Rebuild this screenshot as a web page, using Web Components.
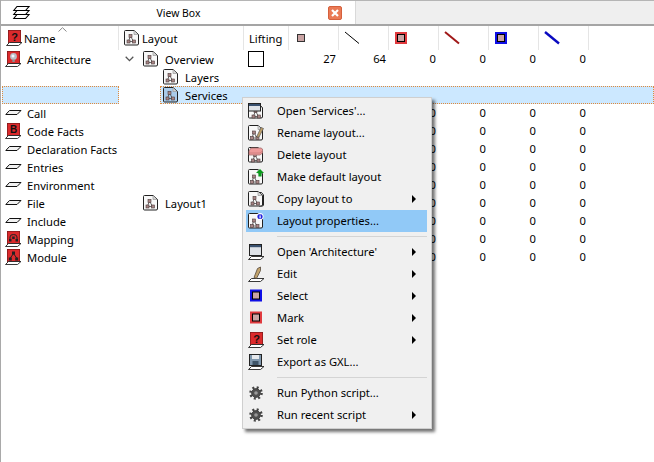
<!DOCTYPE html>
<html>
<head>
<meta charset="utf-8">
<title>View Box</title>
<style>
  html, body { margin: 0; height: 100%; background: #fff; }
  body { font: 11.2px "Noto Sans", "Liberation Sans", sans-serif; color: #000; overflow: hidden; }
</style>
</head>
<body>
<app-window>
  <tab-bar slot="tabs" label="View Box"></tab-bar>

  <tree-header slot="table"></tree-header>
  <tree-row slot="table" icon="bulb" layout="Overview" expanded lift values="27,64,0,0,0,0">Architecture</tree-row>
  <tree-row slot="table" layout="Layers" indent="41"></tree-row>
  <tree-row slot="table" layout="Services" indent="41" selected></tree-row>
  <tree-row slot="table" icon="plane" values=",,0,0,0,0">Call</tree-row>
  <tree-row slot="table" icon="bfact" values=",,0,0,0,0">Code Facts</tree-row>
  <tree-row slot="table" icon="plane" values=",,0,0,0,0">Declaration Facts</tree-row>
  <tree-row slot="table" icon="plane" values=",,0,0,0,0">Entries</tree-row>
  <tree-row slot="table" icon="plane" values=",,0,0,0,0">Environment</tree-row>
  <tree-row slot="table" icon="plane" layout="Layout1" values=",,0,0,0,0">File</tree-row>
  <tree-row slot="table" icon="plane" values=",,0,0,0,0">Include</tree-row>
  <tree-row slot="table" icon="mapping" values=",,0,0,0,0">Mapping</tree-row>
  <tree-row slot="table" icon="module" values=",,0,0,0,0">Module</tree-row>

  <context-menu slot="overlay">
    <menu-item icon="openLayout">Open 'Services'...</menu-item>
    <menu-item icon="rename">Rename layout...</menu-item>
    <menu-item icon="erase">Delete layout</menu-item>
    <menu-item icon="makeDefault">Make default layout</menu-item>
    <menu-item icon="copy" sub>Copy layout to</menu-item>
    <menu-item icon="props" active>Layout properties...</menu-item>
    <menu-sep></menu-sep>
    <menu-item icon="openNode" sub>Open 'Architecture'</menu-item>
    <menu-item icon="edit" sub>Edit</menu-item>
    <menu-item icon="select" sub>Select</menu-item>
    <menu-item icon="mark" sub>Mark</menu-item>
    <menu-item icon="role" sub>Set role</menu-item>
    <menu-item icon="gxl">Export as GXL...</menu-item>
    <menu-sep></menu-sep>
    <menu-item icon="gear">Run Python script...</menu-item>
    <menu-item icon="gear" sub>Run recent script</menu-item>
  </context-menu>
</app-window>

<script>
// little graph drawn inside every layout icon
const nodes = (x, y) => `
  <path d="M${x + 4} ${y + 2}L${x + 2} ${y + 7}M${x + 4} ${y + 2}L${x + 7} ${y + 7.5}M${x + 2} ${y + 7.5}H${x + 7}" stroke="#444" stroke-width=".8" fill="none"/>
  <rect x="${x + 2.5}" y="${y + .5}" width="3" height="3" fill="#a98686" stroke="#4a3a3a" stroke-width=".6"/>
  <rect x="${x + .5}" y="${y + 6}" width="3" height="3" fill="#a98686" stroke="#4a3a3a" stroke-width=".6"/>
  <rect x="${x + 6}" y="${y + 6}" width="3" height="3" fill="#a98686" stroke="#4a3a3a" stroke-width=".6"/>`;

const doc = (fill = '#f8f8f8') => `
  <path d="M.5 1.5Q.5 .5 1.5 .5H10L14.5 4.5V14Q14.5 15 13 15H1.5Q.5 15 .5 14Z" fill="${fill}" stroke="#222"/>
  <path d="M10 .8V4.5H14" fill="#d4d4d4" stroke="#999" stroke-width=".7"/>`;

const plate = '<path d="M3.5 12.5H16L12.5 15.5H.5Z" fill="#fff" stroke="#222" stroke-width=".9"/>';
const redBox = inner => `<rect x="2" y="0" width="13" height="13" fill="#7a1a1a"/><rect x="2.7" y=".7" width="11.6" height="11.6" fill="#dc2a2c"/>${inner}${plate}`;
const frame = color => `<rect x="2" y="1.5" width="12" height="12" fill="${color}"/><rect x="4.5" y="4" width="7" height="7" fill="#c9a3a3" stroke="#000"/>`;
const gear = `
  <circle cx="8" cy="8" r="5.6" fill="none" stroke="#444" stroke-width="2.4" stroke-dasharray="2 2.4"/>
  <circle cx="8" cy="8" r="4.4" fill="#4f4f4f" stroke="#333" stroke-width=".8"/>
  <circle cx="8" cy="8" r="1.8" fill="#999"/>`;

const question = '<text x="8.5" y="10.6" text-anchor="middle" font-family="Liberation Sans" font-weight="700" font-size="11" fill="#111">?</text>';

const ICONS = {
  layout: doc() + nodes(2.5, 4),
  layoutSel: doc('#a9cbea') + nodes(2.5, 4),
  stack: `<g fill="#fff" stroke="#000" stroke-width="1.1"><path d="M4 9.5H16L12.5 13.5H.8Z"/><path d="M4 5.5H16L12.5 9.5H.8Z"/><path d="M4 1.5H16L12.5 5.5H.8Z"/></g>`,
  plane: '<path d="M4.5 5.5H16L12 9.5H.8Z" fill="#f2f2f2" stroke="#111"/>',
  question: redBox(question),
  bulb: redBox('<circle cx="8.5" cy="5.5" r="3.4" fill="#b9bec5"/><circle cx="8" cy="5" r="1.5" fill="#f2f4ff"/><rect x="7.3" y="8.5" width="2.5" height="2.5" fill="#8f8f8f"/>'),
  bfact: redBox('<text x="8.5" y="10.4" text-anchor="middle" font-family="Liberation Sans" font-weight="700" font-size="10" fill="#111">B</text>'),
  mapping: redBox('<path d="M5 8.5V6Q5 3.5 8.5 3.5T12 6V8.5" fill="none" stroke="#222"/><rect x="4" y="8" width="2.5" height="2.5" fill="#222"/><rect x="10.5" y="8" width="2.5" height="2.5" fill="#222"/><rect x="7.2" y="5.5" width="2.5" height="2.5" fill="#222"/>'),
  module: redBox('<path d="M8.5 4.5L5 9.5M8.5 4.5L12 9.5" stroke="#222"/><rect x="7" y="2.5" width="3" height="3" fill="#222"/><rect x="3.8" y="8.5" width="3" height="3" fill="#222"/><rect x="10.2" y="8.5" width="3" height="3" fill="#222"/>'),
  openLayout: doc() + nodes(3.5, 6) + '<rect x=".5" y=".5" width="12" height="7.5" fill="#dfe3e8" stroke="#222"/><rect x="1" y="1" width="11" height="2" fill="#39516f"/>',
  rename: doc() + nodes(2, 5.5) + '<path d="M9 11L13 2.5L15.5 3.5L11 12L9 12.5Z" fill="#c0a068" stroke="#555" stroke-width=".7"/>',
  erase: doc() + nodes(3, 6) + '<path d="M3 1H13L14.5 2V6L12 8H1V4Z" fill="#ee9a9a" stroke="#a07070" stroke-width=".8"/><path d="M1 6H12L14.5 4" fill="none" stroke="#c97878" stroke-width=".8"/>',
  makeDefault: doc() + nodes(2, 5.5) + '<path d="M12 0L16 4H13.6V7.5H10.4V4H8Z" fill="#0b9a1c"/>',
  copy: '<path d="M11 1.5H13.5L15.5 4V14Q15.5 15 14 15H11" fill="#eee" stroke="#222"/>' + doc() + nodes(2.5, 5),
  props: doc() + nodes(2, 5.5) + '<circle cx="12" cy="3.5" r="3.5" fill="#fff"/><circle cx="12" cy="3.5" r="2.6" fill="#2222dd"/><rect x="11.5" y="3" width="1.2" height="2.4" fill="#fff"/><rect x="11.5" y="1.6" width="1.2" height="1" fill="#fff"/>',
  openNode: '<rect x="1.5" y=".5" width="12" height="11" fill="#dfe3e8" stroke="#222"/><rect x="2" y="1" width="11" height="2.2" fill="#39516f"/>' + plate,
  edit: plate + '<path d="M6 11.5L9.5 2.5L12.5 1L12.5 4.5L8.5 12.5Z" fill="#c2a36c" stroke="#55483a" stroke-width=".8"/>',
  select: frame('#0f0fe6'),
  mark: frame('#e03a3e'),
  role: redBox(question),
  gxl: '<rect x="1.5" y=".5" width="12" height="11" fill="#7f97ad" stroke="#222"/><rect x="4" y="1" width="7" height="4" fill="#e6e9ed"/><rect x="4.5" y="7" width="6" height="4" fill="#3e5468"/>' + plate,
  gear,
};

class UiIcon extends HTMLElement {
  connectedCallback() {
    this.attachShadow({ mode: 'open' }).innerHTML = `
      <style>
        :host { display: block; width: 16px; height: 16px; flex: none; }
        svg { display: block; overflow: visible; }
      </style>
      <svg width="16" height="16" viewBox="0 0 16 16">${ICONS[this.getAttribute('name')] || ''}</svg>`;
  }
}
customElements.define('ui-icon', UiIcon);

class AppWindow extends HTMLElement {
  constructor() {
    super();
    this.attachShadow({ mode: 'open' }).innerHTML = `
      <style>
        :host { display: block; position: relative; height: 462px; box-sizing: border-box; border-left: 1px solid #a9a9a9; }
        .table { display: block; padding-left: 1px; }
      </style>
      <slot name="tabs"></slot>
      <div class="table"><slot name="table"></slot></div>
      <slot name="overlay"></slot>`;
  }
}
customElements.define('app-window', AppWindow);

class TabBar extends HTMLElement {
  connectedCallback() {
    this.attachShadow({ mode: 'open' }).innerHTML = `
      <style>
        :host { display: flex; height: 26px; box-sizing: border-box; background: #efefef;
                border-top: 1px solid #b5b5b5; border-bottom: 2px solid #a5a5a5; }
        .tab { width: 355px; display: flex; align-items: center; background: #fff; border-right: 1px solid #d9d9d9;
               box-sizing: border-box; padding: 0 13px 0 12px; }
        .title { flex: 1; text-align: center; font-size: 10.4px; }
        .close { width: 14px; height: 14px; box-sizing: border-box; border: 1px solid #d5603c; border-radius: 2px;
                 background: #ea7a55; }
        .close svg { display: block; }
      </style>
      <div class="tab">
        <ui-icon name="stack"></ui-icon>
        <span class="title">${this.getAttribute('label')}</span>
        <div class="close"><svg width="12" height="12" viewBox="0 0 12 12"><path d="M3 3L9 9M9 3L3 9" stroke="#fff" stroke-width="2.2"/></svg></div>
      </div>`;
  }
}
customElements.define('tab-bar', TabBar);

class TreeHeader extends HTMLElement {
  constructor() {
    super();
    const col = svg => `<div class="c w50">${svg}</div>`;
    const sq = color => `<svg width="14" height="14" viewBox="0 0 14 14">
        <rect x="1" y="1" width="12" height="12" fill="${color}"/>
        <rect x="3.5" y="3.5" width="7" height="7" fill="#c9a3a3" stroke="#000"/></svg>`;
    const line = (color, w) => `<svg width="16" height="14" viewBox="0 0 16 14"><path d="M1 1L15 12.5" stroke="${color}" stroke-width="${w}"/></svg>`;
    this.attachShadow({ mode: 'open' }).innerHTML = `
      <style>
        :host { display: flex; position: relative; height: 24px; }
        .c { display: flex; align-items: center; box-sizing: border-box; border-right: 1px solid #e5e5e5; height: 24px; }
        .name { width: 117px; padding-left: 4px; gap: 2px; }
        .layout { width: 125px; padding-left: 5px; gap: 2px; }
        .lift { width: 45px; padding-left: 5px; }
        .w50 { width: 50px; padding-left: 5px; }
        .caret { position: absolute; left: 56px; top: 1px; }
      </style>
      <div class="c name"><ui-icon name="question"></ui-icon><span>Name</span></div>
      <svg class="caret" width="9" height="5" viewBox="0 0 9 5"><path d="M.5 4.5L4.5 .7L8.5 4.5" fill="none" stroke="#8a8a8a"/></svg>
      <div class="c layout"><ui-icon name="layout"></ui-icon><span>Layout</span></div>
      <div class="c lift"><span>Lifting</span></div>
      ${col(`<svg width="14" height="14" viewBox="0 0 14 14"><rect x="3.5" y="3.5" width="7" height="7" fill="#c9a3a3" stroke="#333"/></svg>`)}
      ${col(line('#000', 1))}
      ${col(sq('#e03a3e'))}
      ${col(line('#a01818', 2))}
      ${col(sq('#0f0fe6'))}
      ${col(line('#0a0ac0', 2.4))}`;
  }
}
customElements.define('tree-header', TreeHeader);

class TreeRow extends HTMLElement {
  connectedCallback() {
    const indent = +(this.getAttribute('indent') || 0);
    const selected = this.hasAttribute('selected');
    const layout = this.getAttribute('layout');
    const icon = this.getAttribute('icon');
    const values = (this.getAttribute('values') || '').split(',');
    const cells = [0, 1, 2, 3, 4, 5].map(i => `<div class="num">${values[i] || ''}</div>`).join('');
    const chevron = this.hasAttribute('expanded')
      ? `<svg width="9" height="6" viewBox="0 0 9 6"><path d="M.7 .8L4.5 4.6L8.3 .8" fill="none" stroke="#555" stroke-width="1.3"/></svg>`
      : '';
    const inset = indent ? 3 : 5;
    this.attachShadow({ mode: 'open' }).innerHTML = `
      <style>
        :host { display: flex; height: 18px; }
        .name { width: 117px; flex: none; display: flex; align-items: center; box-sizing: border-box; padding-left: 3px; gap: 6px; white-space: nowrap; }
        .tail { flex: 1; display: flex; margin-left: ${indent}px; min-width: 0; box-sizing: border-box; }
        .sel { background: #cce8ff; outline: 1px dotted #e08a3c; outline-offset: -1px; }
        .layout { width: ${125 - indent}px; flex: none; display: flex; align-items: center; box-sizing: border-box; padding-left: ${inset}px; }
        .slot { width: 19px; display: flex; align-items: center; flex: none; padding-left: 1px; box-sizing: border-box; }
        .label { margin-left: 6px; }
        .lift { width: 45px; flex: none; display: flex; align-items: center; padding-left: 4px; box-sizing: border-box; }
        .box { width: 16px; height: 16px; box-sizing: border-box; border: 1px solid #000; background: #fff; }
        .num { width: 50px; flex: none; box-sizing: border-box; text-align: right; padding-right: 3px; line-height: 18px; }
      </style>
      <div class="name ${selected ? 'sel' : ''}">
        ${icon ? `<ui-icon name="${icon}"></ui-icon>` : ''}<span><slot></slot></span>
      </div>
      <div class="tail ${selected ? 'sel' : ''}">
        <div class="layout">
          ${indent ? '' : `<div class="slot">${chevron}</div>`}
          ${layout ? `<ui-icon name="${selected ? 'layoutSel' : 'layout'}"></ui-icon><span class="label">${layout}</span>` : ''}
        </div>
        <div class="lift">${this.hasAttribute('lift') ? '<div class="box"></div>' : ''}</div>
        ${cells}
      </div>`;
  }
}
customElements.define('tree-row', TreeRow);

class ContextMenu extends HTMLElement {
  constructor() {
    super();
    this.attachShadow({ mode: 'open' }).innerHTML = `
      <style>
        :host { position: absolute; left: 241px; top: 97px; width: 190px; box-sizing: border-box; display: block; z-index: 5;
                background: #f0f0f0; border: 1px solid #cfcfcf; padding: 2px 4px 2px 3px;
                box-shadow: 3px 3px 3px rgba(0, 0, 0, .55); }
      </style>
      <slot></slot>`;
  }
}
customElements.define('context-menu', ContextMenu);

class MenuItem extends HTMLElement {
  connectedCallback() {
    this.attachShadow({ mode: 'open' }).innerHTML = `
      <style>
        :host { display: flex; align-items: center; height: 22px; padding-left: 2px; }
        :host([active]) { background: #91c9f7; }
        .text { margin-left: 13px; flex: 1; white-space: nowrap; padding-bottom: 2px; }
        .icon { width: 16px; flex: none; }
        .arrow { width: 0; height: 0; border-left: 4px solid #000; border-top: 4px solid transparent; border-bottom: 4px solid transparent; margin-right: 11px; }
      </style>
      <div class="icon"><ui-icon name="${this.getAttribute('icon')}"></ui-icon></div>
      <span class="text"><slot></slot></span>
      ${this.hasAttribute('sub') ? '<div class="arrow"></div>' : ''}`;
  }
}
customElements.define('menu-item', MenuItem);

class MenuSep extends HTMLElement {
  constructor() {
    super();
    this.attachShadow({ mode: 'open' }).innerHTML = `
      <style>
        :host { display: block; height: 9px; padding: 4px 0 0 31px; box-sizing: border-box; }
        div { height: 1px; background: #d4d4d4; }
      </style>
      <div></div>`;
  }
}
customElements.define('menu-sep', MenuSep);
</script>
</body>
</html>
